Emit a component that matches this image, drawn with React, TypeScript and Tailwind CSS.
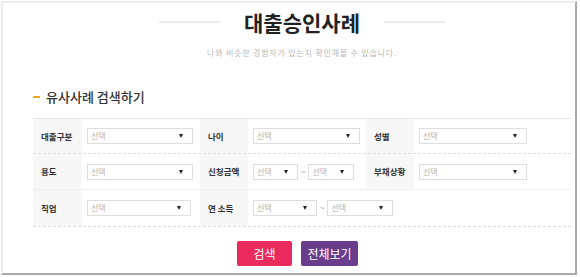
import React from "react";

const font = { fontFamily: '"Noto Sans CJK KR", "Noto Sans", sans-serif' };

const Select = (props: { w: string }) => {
  return (
    <div
      className={`${props.w} h-[16px] border border-[#dedede] bg-white flex items-center justify-between pl-[3px] pr-[9px]`}
    >
      <span className="text-[8px] leading-none text-[#b5b5b5]">선택</span>
      <span className="block w-0 h-0 border-l-[2.5px] border-r-[2.5px] border-t-[4px] border-l-transparent border-r-transparent border-t-[#222]" />
    </div>
  );
};

const Range = (props: { a: string; b: string }) => {
  return (
    <div className="flex items-center">
      <Select w={props.a} />
      <span className="text-[8px] text-[#999] mx-[3px]">~</span>
      <Select w={props.b} />
    </div>
  );
};

const Label = (props: { text: string }) => {
  return (
    <div className="bg-[#f7f7f7] flex items-center pl-[8px] text-[8.5px] font-bold text-[#333] h-full whitespace-nowrap">
      {props.text}
    </div>
  );
};

const Row = (props: {
  cells: [string, React.ReactNode][];
  border: string;
  h: string;
}) => {
  return (
    <div
      className={`grid grid-cols-[49px_118px_48px_118px_48px_1fr] ${props.h} border-b ${props.border}`}
    >
      {props.cells.map(([label, field], i) => (
        <React.Fragment key={i}>
          <Label text={label} />
          <div
            className={`flex items-center pl-[5px] ${
              i === props.cells.length - 1 && props.cells.length === 2
                ? "col-span-3"
                : ""
            }`}
          >
            {field}
          </div>
        </React.Fragment>
      ))}
    </div>
  );
};

const App = () => {
  return (
    <div className="w-[580px] h-[277px] bg-white" style={font}>
      <div className="ml-[1px] mt-[1px] w-[576px] h-[274px] border-2 border-[#ececec] border-r-[#a9a9a9] border-b-[#a9a9a9] bg-white">
        <div className="ml-[30px] w-[538px]">
          <div className="pt-[4px] flex items-center justify-center gap-[24px]">
            <div className="w-[61px] h-[2px] bg-[#ebebeb]" />
            <h1 className="text-[21px] leading-[30px] font-bold text-[#222]">
              대출승인사례
            </h1>
            <div className="w-[61px] h-[2px] bg-[#ebebeb]" />
          </div>
          <p className="mt-[9px] text-center text-[8px] leading-[14px] tracking-[0.8px] text-[#b8b8b8]">
            나와 비슷한 경험자가 있는지 확인해볼 수 있습니다.
          </p>
          <div className="mt-[27px] h-[20px] flex items-center">
            <span className="w-[7px] h-[2px] bg-[#f2a41f]" />
            <h2 className="ml-[6px] text-[13px] leading-[20px] font-medium text-[#333]">
              유사사례 검색하기
            </h2>
          </div>
          <div className="mt-[11px] border-t border-[#e6e6e6]">
            <Row
              h="h-[35px]"
              border="border-dashed border-[#dcdcdc]"
              cells={[
                ["대출구분", <Select w="w-[106px]" />],
                ["나이", <Select w="w-[107px]" />],
                ["성별", <Select w="w-[108px]" />],
              ]}
            />
            <Row
              h="h-[36px]"
              border="border-[#eeeeee]"
              cells={[
                ["용도", <Select w="w-[106px]" />],
                ["신청금액", <Range a="w-[45px]" b="w-[46px]" />],
                ["부채상황", <Select w="w-[108px]" />],
              ]}
            />
            <Row
              h="h-[37px]"
              border="border-dashed border-[#dcdcdc]"
              cells={[
                ["직업", <Select w="w-[104px]" />],
                ["연 소득", <Range a="w-[64px]" b="w-[66px]" />],
              ]}
            />
          </div>
          <div className="mt-[14px] flex justify-center gap-[9px] pr-[9px]">
            <button className="w-[55px] h-[25px] rounded-[2px] bg-[#ea2a5c] text-white text-[12px]">
              검색
            </button>
            <button className="w-[57px] h-[25px] rounded-[2px] bg-[#6a3c8c] text-white text-[12px]">
              전체보기
            </button>
          </div>
        </div>
      </div>
    </div>
  );
};

export default App;
